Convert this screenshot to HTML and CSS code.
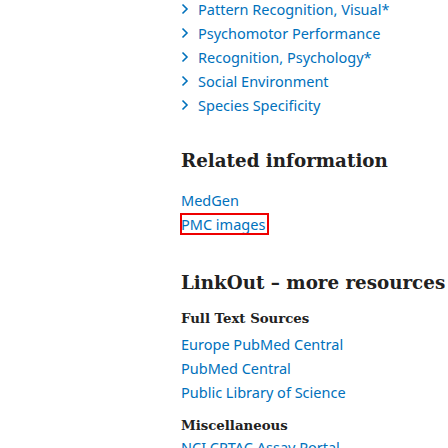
FILE: index.html
```html
<!DOCTYPE html>
<html>
<head>
<meta charset="utf-8">
<link rel="stylesheet" href="styles.css">
</head>
<body>
<div class="page">
  <ul class="terms">
    <li><svg class="chev" viewBox="0 0 8 12" width="8" height="12"><path d="M1.5 1.5 L6 6 L1.5 10.5" fill="none" stroke="currentColor" stroke-width="1.6"/></svg><a href="#">Pattern Recognition, Visual*</a></li>
    <li><svg class="chev" viewBox="0 0 8 12" width="8" height="12"><path d="M1.5 1.5 L6 6 L1.5 10.5" fill="none" stroke="currentColor" stroke-width="1.6"/></svg><a href="#">Psychomotor Performance</a></li>
    <li><svg class="chev" viewBox="0 0 8 12" width="8" height="12"><path d="M1.5 1.5 L6 6 L1.5 10.5" fill="none" stroke="currentColor" stroke-width="1.6"/></svg><a href="#">Recognition, Psychology*</a></li>
    <li><svg class="chev" viewBox="0 0 8 12" width="8" height="12"><path d="M1.5 1.5 L6 6 L1.5 10.5" fill="none" stroke="currentColor" stroke-width="1.6"/></svg><a href="#">Social Environment</a></li>
    <li><svg class="chev" viewBox="0 0 8 12" width="8" height="12"><path d="M1.5 1.5 L6 6 L1.5 10.5" fill="none" stroke="currentColor" stroke-width="1.6"/></svg><a href="#">Species Specificity</a></li>
  </ul>

  <section class="related">
    <h2 class="heading">Related information</h2>
    <ul class="links">
      <li><a href="#">MedGen</a></li>
      <li><a href="#" class="focused">PMC images</a></li>
    </ul>
  </section>

  <section class="linkout">
    <h2 class="heading">LinkOut – more resources</h2>
    <h3 class="subhead">Full Text Sources</h3>
    <ul class="links">
      <li><a href="#">Europe PubMed Central</a></li>
      <li><a href="#">PubMed Central</a></li>
      <li><a href="#">Public Library of Science</a></li>
    </ul>
    <h3 class="subhead misc">Miscellaneous</h3>
    <ul class="links last">
      <li><a href="#">NCI CPTAC Assay Portal</a></li>
    </ul>
  </section>
</div>
</body>
</html>
```

FILE: styles.css
```css
html, body {
  margin: 0;
  padding: 0;
  background: #ffffff;
}
.page {
  padding-left: 181px;
  font-family: "Noto Sans", "Open Sans", sans-serif;
  font-size: 14.5px;
  color: #0071bc;
  white-space: nowrap;
}
a {
  color: #0071bc;
  text-decoration: none;
}
ul {
  list-style: none;
  margin: 0;
  padding: 0;
}
.terms {
  margin-top: -3px;
}
.terms li {
  display: flex;
  align-items: center;
  height: 24px;
  line-height: 24px;
}
.chev {
  color: #0071bc;
  margin-right: 9px;
  flex: none;
}
.heading {
  font-family: "DejaVu Serif", "Liberation Serif", serif;
  font-weight: bold;
  font-size: 18.3px;
  color: #212121;
  margin: 0;
  line-height: 28px;
}
.related {
  margin-top: 30px;
}
.related .links {
  margin-top: 13px;
}
.links li {
  line-height: 24px;
  height: 24px;
}
.focused {
  outline: 2px solid #ee0000;
  outline-offset: -1px;
  display: inline-block;
  line-height: 20px;
  padding-right: 3px;
}
.linkout {
  margin-top: 33px;
}
.subhead {
  font-family: "DejaVu Serif", "Liberation Serif", serif;
  font-weight: bold;
  font-size: 13.3px;
  color: #212121;
  margin: 10px 0 0;
  line-height: 24px;
}
.subhead + .links {
  margin-top: 1px;
}
.subhead.misc {
  margin-top: 10px;
}
.subhead + .links.last {
  margin-top: -3px;
}
```
